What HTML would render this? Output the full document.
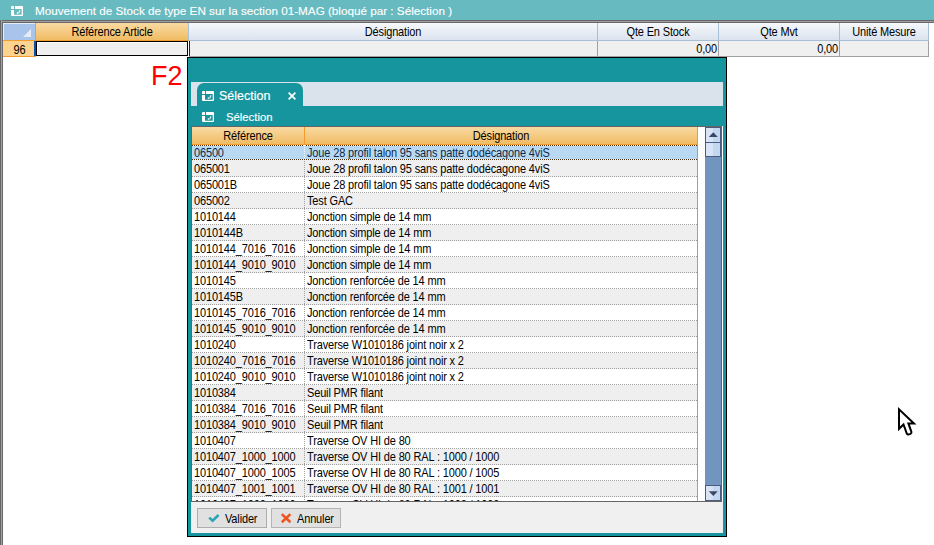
<!DOCTYPE html>
<html><head><meta charset="utf-8">
<style>
*{margin:0;padding:0;box-sizing:border-box}
html,body{width:934px;height:545px;overflow:hidden;background:#fff;font-family:"Liberation Sans",sans-serif;font-size:11px;letter-spacing:-0.15px;color:#000}
.a{position:absolute}
.t{white-space:pre;line-height:1}
#title{left:0;top:0;width:934px;height:20px;background:#67babf}
#ttxt{left:35px;top:5px;color:#fff;font-size:11.7px;letter-spacing:0;-webkit-text-stroke:0.12px #fff}
.hb{background:linear-gradient(#f6f8fb,#dbe3ee);border-right:1px solid #a8bfd8;border-bottom:1px solid #a8bfd8}
.ho{background:linear-gradient(#f9daa3,#f1bc63);border-right:1px solid #f29b2f;border-bottom:1px solid #f29b2f}
.hc{text-align:center;top:23px;height:18px;padding-top:3px}
.rc{top:41px;height:16px;background:#f0f0f0;border-right:1px solid #a0a0a0;border-bottom:1px solid #a0a0a0;text-align:right;padding-right:1px;padding-top:2px}
#dlg{left:187px;top:57px;width:540px;height:480px;background:#17959e;border:1px solid #000}
.row{position:absolute;left:0;width:505px;height:16px;background-image:repeating-linear-gradient(90deg,#a0a0a0 0 1px,transparent 1px 2px);background-size:100% 1px;background-position:0 15px;background-repeat:no-repeat}
.row span{position:absolute;top:2px;white-space:pre;line-height:1;transform:scaleY(1.12);transform-origin:0 0}
b.s{font-weight:normal;display:inline-block;transform:scaleY(1.12);transform-origin:0 0}
.c1{left:2px}
.c2{left:115px}
.row i{position:absolute;left:112px;top:0;width:1px;height:16px;background:repeating-linear-gradient(#a0a0a0 0 1px,transparent 1px 2px)}
.sel i{background:repeating-linear-gradient(#fff 0 1px,transparent 1px 2px)}
.sel::before,.sel::after{content:"";position:absolute;left:0;width:505px;height:1px;background:repeating-linear-gradient(90deg,#4a2c10 0 1px,#f4f8fc 1px 2px)}
.sel::before{top:0}.sel::after{top:14px}
.g{background-color:#efefef}
.w{background-color:#fff}
.sel{background-color:#b9d9f3;color:#0b2a4a;background-image:linear-gradient(#b9d9f3 0 15px,#efefef 15px)!important;background-size:auto!important;background-position:0 0!important}
.sel span{color:#0b2a4a}
.sbb{background:linear-gradient(90deg,#d6e4f5 50%,#c4d7f0 50%);border:1px solid #4d5b80}
.btn{position:absolute;top:450px;height:20px;background:#e1e1e1;border:1px solid #adadad}
</style></head><body>
<div id="title" class="a">
  <svg class="a" style="left:11px;top:6px" width="12" height="10" viewBox="0 0 12 10"><path fill="#fff" d="M0 1Q0 0 1 0H3V3H0ZM4 0H11Q12 0 12 1V9Q12 10 11 10H1Q0 10 0 9V4H3V8.7H10.7V3H4Z"/><path d="M9 4.2L7.7 7.2" stroke="#fff" stroke-width="1.2" opacity=".85"/><circle cx="6.5" cy="7" r=".85" fill="#fff"/></svg>
  <div id="ttxt" class="a t">Mouvement de Stock de type EN sur la section 01-MAG (bloqué par : Sélection )</div>
</div>
<!-- sunken border -->
<div class="a" style="left:0;top:20px;width:934px;height:3px;background:linear-gradient(#666 0 1px,#a0a0a0 1px 2px,#696969 2px)"></div>
<div class="a" style="left:0;top:20px;width:3px;height:525px;background:linear-gradient(90deg,#666 0 1px,#a0a0a0 1px 2px,#696969 2px)"></div>
<div class="a" style="left:1px;top:21px;width:1px;height:524px;background:#a0a0a0"></div>
<div class="a" style="left:1px;top:21px;width:933px;height:1px;background:#a0a0a0"></div>
<!-- main grid header -->
<div class="a" style="left:3px;top:23px;width:33px;height:18px;background:#a9c4ea;border-right:1px solid #f29b2f;border-bottom:1px solid #f29b2f;box-shadow:inset 1px 1px 0 #e4ecf8"></div>
<svg class="a" style="left:23px;top:29px" width="8" height="8"><path d="M8 0V8H0Z" fill="#e6ecf6"/></svg>
<div class="a hc ho t" style="left:36px;width:153px;border-right-color:#a8bfd8"><b class="s">Référence Article</b></div>
<div class="a hc hb t" style="left:189px;width:409px"><b class="s">Désignation</b></div>
<div class="a hc hb t" style="left:598px;width:121px"><b class="s">Qte En Stock</b></div>
<div class="a hc hb t" style="left:719px;width:121px"><b class="s">Qte Mvt</b></div>
<div class="a hc hb t" style="left:840px;width:89px"><b class="s">Unité Mesure</b></div>
<!-- row 96 -->
<div class="a t" style="left:3px;top:41px;width:33px;height:16px;background:#fdd48f;border-bottom:1px solid #f29b2f;text-align:center;padding-top:3px"><b class="s">96</b></div>
<div class="a" style="left:34px;top:41px;width:2px;height:15px;background:#0a4fb5"></div>
<div class="a" style="left:36px;top:41px;width:152px;height:15px;background:#efefef;border:1px solid #000;box-shadow:inset 1px 1px 0 #fff"></div>
<div class="a" style="left:188px;top:41px;width:2px;height:15px;background:linear-gradient(90deg,#fff 0 1px,#222 1px);z-index:2"></div>
<div class="a rc t" style="left:189px;width:409px"></div>
<div class="a rc t" style="left:598px;width:121px"><b class="s">0,00</b></div>
<div class="a rc t" style="left:719px;width:121px"><b class="s">0,00</b></div>
<div class="a rc t" style="left:840px;width:89px"></div>
<!-- F2 -->
<div class="a t" style="left:151px;top:63px;font-size:27px;color:#f00;letter-spacing:0">F2</div>
<!-- cursor -->
<svg class="a" style="left:897px;top:406px" width="20" height="30" viewBox="0 0 20 30"><path d="M2 3.2V22.8L6.5 18.5L9.8 27.6Q10.6 28.8 12.1 28.4L13.4 27.9Q14.8 27.1 14.4 25.8L11.4 17.4H17Z" fill="#fff" stroke="#000" stroke-width="2" stroke-linejoin="miter"/></svg>
<!-- dialog -->
<div id="dlg" class="a">
  <div class="a" style="left:3px;top:24px;width:532px;height:24px;background:#dae3ec"></div>
  <div class="a" style="left:9px;top:25px;width:106px;height:25px;background:#17959e;border-radius:7px 7px 0 0"></div>
  <svg class="a" style="left:14px;top:33px" width="12" height="10" viewBox="0 0 12 10"><path fill="#fff" d="M0 1Q0 0 1 0H3V3H0ZM4 0H11Q12 0 12 1V9Q12 10 11 10H1Q0 10 0 9V4H3V8.7H10.7V3H4Z"/><path d="M9 4.2L7.7 7.2" stroke="#fff" stroke-width="1.2" opacity=".85"/><circle cx="6.5" cy="7" r=".85" fill="#fff"/></svg>
  <div class="a t" style="left:31px;top:32px;color:#fff;font-size:12.5px;letter-spacing:0;-webkit-text-stroke:0.15px #fff">Sélection</div>
  <svg class="a" style="left:100px;top:34px" width="8" height="8" viewBox="0 0 8 8"><path d="M0.6 0.6L7.4 7.4M7.4 0.6L0.6 7.4" stroke="#fff" stroke-width="1.7"/></svg>
  <svg class="a" style="left:14px;top:54px" width="12" height="10" viewBox="0 0 12 10"><path fill="#fff" d="M0 1Q0 0 1 0H3V3H0ZM4 0H11Q12 0 12 1V9Q12 10 11 10H1Q0 10 0 9V4H3V8.7H10.7V3H4Z"/><path d="M9 4.2L7.7 7.2" stroke="#fff" stroke-width="1.2" opacity=".85"/><circle cx="6.5" cy="7" r=".85" fill="#fff"/></svg>
  <div class="a t" style="left:38px;top:54px;color:#fff;font-size:11.3px;letter-spacing:0;-webkit-text-stroke:0.15px #fff">Sélection</div>
  <div class="a" style="left:534px;top:68px;width:1px;height:376px;background:#fff"></div>
  <div id="grid" class="a" style="left:3px;top:68px;width:531px;height:376px;background:#fff;border:1px solid #646464;overflow:hidden">
    <div class="a ho t" style="left:0;top:0;width:113px;height:18px;text-align:center;padding-top:3px"><b class="s">Référence</b></div>
    <div class="a ho t" style="left:113px;top:0;width:393px;height:18px;text-align:center;padding-top:3px"><b class="s">Désignation</b></div>
    <div class="a" style="left:0;top:18px;width:506px;height:356px;overflow:hidden">
<div class="row sel" style="top:0px"><span class="c1">06500</span><i></i><span class="c2">Joue 28 profil talon 95 sans patte dodécagone 4viS</span></div>
<div class="row g" style="top:16px"><span class="c1">065001</span><i></i><span class="c2">Joue 28 profil talon 95 sans patte dodécagone 4viS</span></div>
<div class="row w" style="top:32px"><span class="c1">065001B</span><i></i><span class="c2">Joue 28 profil talon 95 sans patte dodécagone 4viS</span></div>
<div class="row g" style="top:48px"><span class="c1">065002</span><i></i><span class="c2">Test GAC</span></div>
<div class="row w" style="top:64px"><span class="c1">1010144</span><i></i><span class="c2">Jonction simple de 14 mm</span></div>
<div class="row g" style="top:80px"><span class="c1">1010144B</span><i></i><span class="c2">Jonction simple de 14 mm</span></div>
<div class="row w" style="top:96px"><span class="c1">1010144_7016_7016</span><i></i><span class="c2">Jonction simple de 14 mm</span></div>
<div class="row g" style="top:112px"><span class="c1">1010144_9010_9010</span><i></i><span class="c2">Jonction simple de 14 mm</span></div>
<div class="row w" style="top:128px"><span class="c1">1010145</span><i></i><span class="c2">Jonction renforcée de 14 mm</span></div>
<div class="row g" style="top:144px"><span class="c1">1010145B</span><i></i><span class="c2">Jonction renforcée de 14 mm</span></div>
<div class="row w" style="top:160px"><span class="c1">1010145_7016_7016</span><i></i><span class="c2">Jonction renforcée de 14 mm</span></div>
<div class="row g" style="top:176px"><span class="c1">1010145_9010_9010</span><i></i><span class="c2">Jonction renforcée de 14 mm</span></div>
<div class="row w" style="top:192px"><span class="c1">1010240</span><i></i><span class="c2">Traverse W1010186 joint noir x 2</span></div>
<div class="row g" style="top:208px"><span class="c1">1010240_7016_7016</span><i></i><span class="c2">Traverse W1010186 joint noir x 2</span></div>
<div class="row w" style="top:224px"><span class="c1">1010240_9010_9010</span><i></i><span class="c2">Traverse W1010186 joint noir x 2</span></div>
<div class="row g" style="top:240px"><span class="c1">1010384</span><i></i><span class="c2">Seuil PMR filant</span></div>
<div class="row w" style="top:256px"><span class="c1">1010384_7016_7016</span><i></i><span class="c2">Seuil PMR filant</span></div>
<div class="row g" style="top:272px"><span class="c1">1010384_9010_9010</span><i></i><span class="c2">Seuil PMR filant</span></div>
<div class="row w" style="top:288px"><span class="c1">1010407</span><i></i><span class="c2">Traverse OV HI de 80</span></div>
<div class="row g" style="top:304px"><span class="c1">1010407_1000_1000</span><i></i><span class="c2">Traverse OV HI de 80 RAL : 1000 / 1000</span></div>
<div class="row w" style="top:320px"><span class="c1">1010407_1000_1005</span><i></i><span class="c2">Traverse OV HI de 80 RAL : 1000 / 1005</span></div>
<div class="row g" style="top:336px"><span class="c1">1010407_1001_1001</span><i></i><span class="c2">Traverse OV HI de 80 RAL : 1001 / 1001</span></div>
<div class="row w" style="top:352px"><span class="c1">1010407_1002_1002</span><i></i><span class="c2">Traverse OV HI de 80 RAL : 1002 / 1002</span></div>
    </div>
    <div class="a" style="left:505px;top:18px;width:1px;height:356px;background:#a0a0a0"></div>
    <div id="sb" class="a" style="left:513px;top:0;width:16px;height:374px;background:#7295c0">
      <div class="a sbb" style="left:0;top:0;width:16px;height:16px"><svg class="a" style="left:2px;top:4px" width="11" height="6"><path d="M0.8 5L5.3 0.2L9.8 5Z" fill="#3c4668"/></svg></div>
      <div class="a sbb" style="left:0;top:15px;width:16px;height:15px"></div>
      <div class="a sbb" style="left:0;top:358px;width:16px;height:16px"><svg class="a" style="left:2px;top:5px" width="11" height="6"><path d="M0.8 0.2L5.3 5L9.8 0.2Z" fill="#3c4668"/></svg></div>
    </div>
  </div>
  <div class="a" style="left:3px;top:444px;width:532px;height:31px;background:#f0f0f0"></div>
  <div class="btn" style="left:9px;width:70px">
    <svg class="a" style="left:8px;top:3px" width="16" height="12" viewBox="0 0 16 12"><path d="M3.2 5.6L6.6 8.8L12.6 3" stroke="#2aa6b4" stroke-width="2.6" fill="none"/></svg>
    <div class="a t" style="left:27px;top:4px"><b class="s">Valider</b></div>
  </div>
  <div class="btn" style="left:83px;width:70px;border-color:#b4b4b4">
    <svg class="a" style="left:8px;top:3px" width="13" height="12" viewBox="0 0 13 12"><path d="M1.8 2.1L10.4 10.2M10.4 2.1L1.8 10.2" stroke="#ee5420" stroke-width="2.6" fill="none"/></svg>
    <div class="a t" style="left:25px;top:4px"><b class="s">Annuler</b></div>
  </div>
</div>
</body></html>
